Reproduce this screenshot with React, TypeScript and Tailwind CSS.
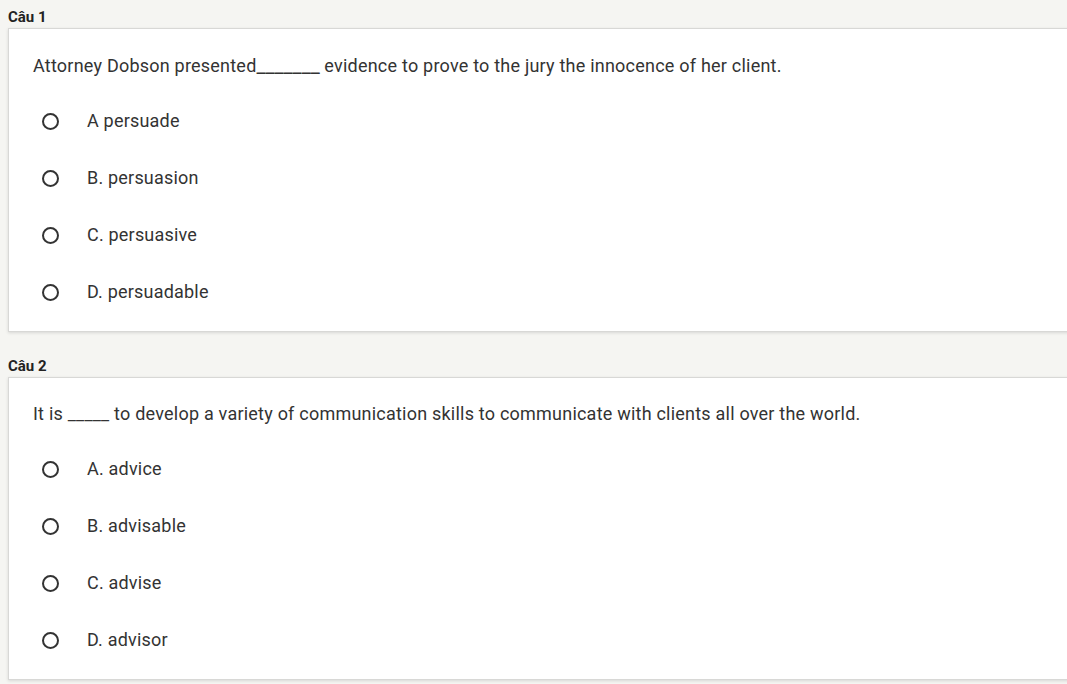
import React from "react";

const questions = [
  {
    label: "Câu 1",
    text: (
      <>
        Attorney Dobson presented<span className="text-[20px] tracking-normal leading-[20px]">_______</span> evidence to
        prove to the jury the innocence of her client.
      </>
    ),
    options: ["A persuade", "B. persuasion", "C. persuasive", "D. persuadable"],
    pt: "pt-[24px]",
  },
  {
    label: "Câu 2",
    text: (
      <>It is _____ to develop a variety of communication skills to communicate with clients all over the world.</>
    ),
    options: ["A. advice", "B. advisable", "C. advise", "D. advisor"],
    pt: "pt-[23px]",
  },
];

export default function App() {
  return (
    <div
      className="w-[1067px] h-[684px] overflow-hidden bg-[#f5f5f2] pl-[8px] pt-[7px] text-[#333333]"
      style={{ fontFamily: "Roboto, 'Noto Sans', sans-serif" }}
    >
      {questions.map((q, i) => (
        <div key={i} className={i > 0 ? "mt-[24px]" : ""}>
          <div className="text-[15px] leading-[20px] font-bold text-[#222222] mb-[1px]">{q.label}</div>
          <div className={`w-[1080px] bg-white border border-[#d8d8d6] shadow-[0_1px_3px_rgba(0,0,0,0.12)] ${q.pt} pb-[27px] pl-[24px]`}>
            <div className="text-[18px] leading-[26px] tracking-[0.22px]">{q.text}</div>
            <div className="mt-[30px] flex flex-col gap-[33px]">
              {q.options.map((o, j) => (
                <div key={j} className="flex items-center h-[24px]">
                  <span className="ml-[9px] w-[17px] h-[17px] rounded-full border-2 border-[#333333] box-border" />
                  <span className="ml-[28px] text-[18px] leading-[24px] tracking-[0.2px]">{o}</span>
                </div>
              ))}
            </div>
          </div>
        </div>
      ))}
    </div>
  );
}
